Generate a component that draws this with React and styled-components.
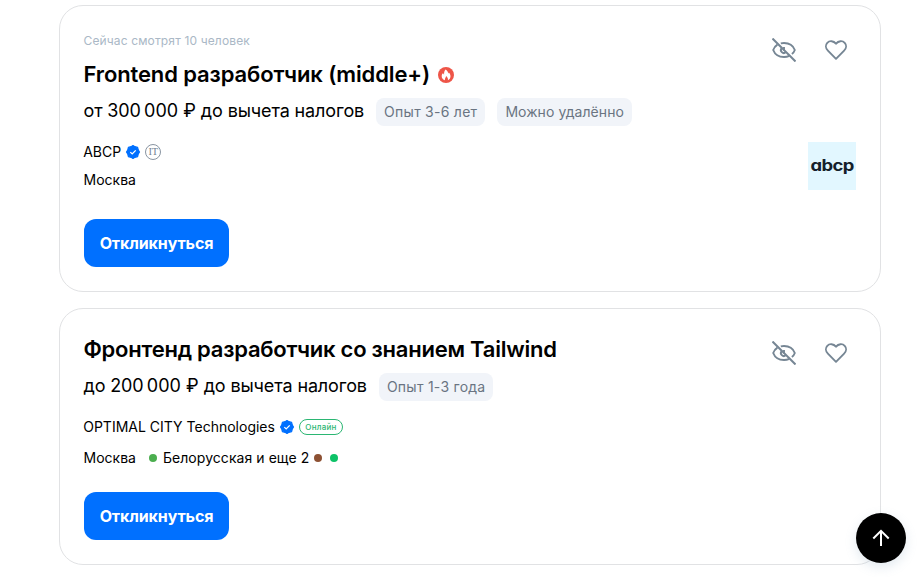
import React from 'react';
import styled, { createGlobalStyle } from "styled-components";

const GlobalStyle = createGlobalStyle`
  * {
    box-sizing: border-box;
  }
  body {
    margin: 0;
    background: #fff;
    color: #000;
    font-family: Inter, "Liberation Sans", sans-serif;
    overflow: hidden;
  }
`;

const List = styled.main`
  display: flex;
  flex-direction: column;
  gap: 16px;
  width: 822px;
  margin-left: 59px;
  padding-top: 5px;
`;

const Card = styled.article`
  display: flex;
  justify-content: space-between;
  padding: 24px;
  border: 1px solid #e1e2e4;
  border-radius: 24px;
`;

const Info = styled.div`
  display: flex;
  flex-direction: column;
  align-items: flex-start;
`;

const Viewers = styled.div`
  height: 22px;
  margin-bottom: 6px;
  margin-left: -0.5px;
  font-size: 12px;
  line-height: 22px;
  letter-spacing: 0.14px;
  color: #aab8c6;
`;

const TitleRow = styled.div`
  display: flex;
  align-items: center;
  gap: 8px;
  height: 28px;
  margin-top: 3px;
  margin-left: -0.5px;
`;

const Title = styled.h2`
  margin: 0;
  padding-bottom: 2px;
  font-size: 22px;
  font-weight: 600;
  line-height: 28px;
  letter-spacing: ${(p) => p.$tracking}px;
  white-space: nowrap;
`;

const SalaryRow = styled.div`
  display: flex;
  gap: 12px;
  margin-top: 9px;
  margin-left: -0.5px;
`;

const Salary = styled.span`
  font-size: 18px;
  line-height: 26px;
  letter-spacing: -0.13px;
  white-space: nowrap;
`;

const Tag = styled.span`
  height: 28px;
  padding: 0 8px;
  border-radius: 8px;
  background: #f1f4f9;
  color: #6a7482;
  font-size: 14px;
  line-height: 28px;
  letter-spacing: ${(p) => (p.$wide ? 0.26 : 0.06)}px;
  white-space: nowrap;
`;

const CompanyRow = styled.div`
  display: flex;
  align-items: center;
  gap: 4px;
  height: 20px;
  margin-top: 16px;
  margin-left: -0.8px;
  font-size: 14px;
`;

const AddressRow = styled.div`
  display: flex;
  align-items: center;
  height: 20px;
  margin-top: ${(p) => (p.$metro ? 11 : 8)}px;
  margin-left: -0.5px;
  font-size: 14px;
`;

const Text = styled.span`
  padding-bottom: 2px;
  letter-spacing: ${(p) => p.$tracking || 0}px;
  white-space: nowrap;
`;

const Dot = styled.i`
  width: 8px;
  height: 8px;
  margin-left: ${(p) => p.$left}px;
  margin-right: ${(p) => p.$right || 0}px;
  border-radius: 50%;
  background: ${(p) => p.$color};
`;

const Online = styled.span`
  width: 44px;
  height: 16px;
  border: 1px solid #2bb673;
  border-radius: 8px;
  color: #2bb673;
  font-size: 8px;
  font-weight: 500;
  line-height: 14px;
  letter-spacing: 0.25px;
  text-align: center;
`;

const RespondButton = styled.button`
  width: 145px;
  height: 48px;
  margin-top: ${(p) => (p.$metro ? 24 : 29)}px;
  padding: 0;
  border: none;
  border-radius: 12px;
  background: #0070ff;
  color: #fff;
  font-family: inherit;
  font-size: 16px;
  font-weight: 700;
  letter-spacing: -0.12px;
  cursor: pointer;
`;

const Side = styled.div`
  display: flex;
  flex-direction: column;
  align-items: flex-end;
  gap: 72px;
`;

const Actions = styled.div`
  display: flex;
  gap: 12px;
`;

const IconButton = styled.button`
  display: grid;
  place-items: center;
  width: 40px;
  height: 40px;
  padding: 0;
  border: none;
  background: none;
  color: #768694;
  cursor: pointer;
`;

const Logo = styled.div`
  display: grid;
  place-items: center;
  width: 48px;
  height: 48px;
  background: #e2f7ff;
  color: #14202b;

  span {
    font-size: 17px;
    font-weight: 700;
    line-height: 20px;
    letter-spacing: -0.5px;
    font-feature-settings: "cv11";
    padding-bottom: 3px;
    transform: scale(1.08, 0.93);
  }
`;

const UpButton = styled.button`
  position: fixed;
  left: 856px;
  top: 513px;
  display: grid;
  place-items: center;
  width: 50px;
  height: 50px;
  padding: 0;
  border: none;
  border-radius: 50%;
  background: #000;
  color: #fff;
  box-shadow: 0 4px 12px rgba(112, 146, 177, 0.2);
  cursor: pointer;
`;

const HideIcon = () => (
  <svg width="24" height="24" viewBox="0 0 24 24" fill="none" stroke="currentColor" strokeWidth="1.9">
    <path d="M5.4 6.600C3.400 7.900 2 9.900 1.200 12c1.600 4.200 5.900 7 10.800 7 1.900 0 3.700-.4 5.300-1.200" />
    <path d="M8.800 5.400c1-.3 2.100-.4 3.200-.4 4.900 0 9.200 2.800 10.800 7-.5 1.500-1.500 2.900-2.900 4" />
    <path d="M9.800 10.200a2.800 2.800 0 1 0 4 4M12 9v3.500" />
    <path d="M.5.5l23 23" strokeWidth="2" />
  </svg>
);

const HeartIcon = () => (
  <svg width="24" height="24" viewBox="0 0 24 24" fill="none" stroke="currentColor" strokeWidth="1.9" strokeLinejoin="round">
    <path d="M12 20.800 3.900 12.700C1.400 10.200 1.400 6.800 3.300 4.800c2.200-2.400 6.200-2.200 8.700.9 2.500-3.100 6.500-3.300 8.700-.9 1.900 2 1.900 5.400-.6 7.900Z" />
  </svg>
);

const FireIcon = () => (
  <svg width="16" height="16" viewBox="0 0 16 16">
    <circle cx="8" cy="8" r="8" fill="#ee5548" />
    <path fill="#fff" d="M7.600 2.500c1.900 1.300 2.600 2.600 2.500 4.100.4-.3.600-.6.700-1.100 1.100 1.100 1.700 2.400 1.700 3.800 0 1.900-1 3.200-2.600 3.900.4-1.600-.4-2.900-1.800-4.100-.1 1.400-1.500 2.300-1.200 4.100-1.800-.6-3.200-2-3.200-4 0-1.400.5-2.300 1.400-3.100.1.900.5 1.300 1 1.600-.2-2 .3-3.800 1.500-5.200Z" />
  </svg>
);

const VerifiedIcon = () => (
  <svg width="16" height="16" viewBox="0 0 16 16">
    <path fill="#0070ff" stroke="#0070ff" strokeWidth="1.200" strokeLinejoin="round" d="m8 1.500 1.900 1.200 2.700.7.700 2.700L14.500 8l-1.200 1.900-.7 2.700-2.700.7L8 14.500l-1.900-1.200-2.700-.7-.7-2.700L1.500 8l1.200-1.900.7-2.700 2.700-.7Z" />
    <path fill="none" stroke="#fff" strokeWidth="1.300" d="m5.300 8.100 1.900 1.800 3.500-3.500" />
  </svg>
);

const ItBadge = styled.span`
  display: grid;
  place-items: center;
  width: 16px;
  height: 16px;
  border: 1px solid #8995a2;
  border-radius: 50%;
  color: #768694;
  font-family: "Liberation Serif", serif;
  font-size: 10.5px;
  line-height: 14px;
  letter-spacing: -0.3px;
`;

const Vacancy = ({ vacancy }) => {
  const { viewers, title, tracking, hot, salary, experience, remote, company, it, online, metro, logo } = vacancy;

  return (
    <Card>
      <Info>
        {viewers && <Viewers>{viewers}</Viewers>}
        <TitleRow>
          <Title $tracking={tracking}>{title}</Title>
          {hot && <FireIcon />}
        </TitleRow>
        <SalaryRow>
          <Salary>{salary}</Salary>
          <Tag $wide>{experience}</Tag>
          {remote && <Tag>Можно удалённо</Tag>}
        </SalaryRow>
        <CompanyRow>
          <Text>{company}</Text>
          <VerifiedIcon />
          {it && <ItBadge>IT</ItBadge>}
          {online && <Online>Онлайн</Online>}
        </CompanyRow>
        <AddressRow $metro={metro}>
          <Text>Москва</Text>
          {metro && (
            <>
              <Dot $color="#4bae4f" $left={13} $right={6} />
              <Text $tracking={0.06}>Белорусская и еще 2</Text>
              <Dot $color="#8d5133" $left={5} />
              <Dot $color="#0dc267" $left={7.5} />
            </>
          )}
        </AddressRow>
        <RespondButton $metro={metro}>Откликнуться</RespondButton>
      </Info>
      <Side>
        <Actions>
          <IconButton aria-label="Скрыть"><HideIcon /></IconButton>
          <IconButton aria-label="В избранное"><HeartIcon /></IconButton>
        </Actions>
        {logo && <Logo><span>{logo}</span></Logo>}
      </Side>
    </Card>
  );
}

const vacancies = [
  {
    viewers: 'Сейчас смотрят 10 человек',
    title: 'Frontend разработчик (middle+)',
    tracking: -0.12,
    hot: true,
    salary: 'от 300\u202f000 ₽ до вычета налогов',
    experience: 'Опыт 3-6 лет',
    remote: true,
    company: 'ABCP',
    it: true,
    logo: 'abcp',
  },
  {
    title: 'Фронтенд разработчик со знанием Tailwind',
    tracking: -0.24,
    salary: 'до 200\u202f000 ₽ до вычета налогов',
    experience: 'Опыт 1-3 года',
    company: 'OPTIMAL CITY Technologies',
    online: true,
    metro: true,
  },
];

const App = () => {
  return (
    <>
      <GlobalStyle />
      <List>
        {vacancies.map((v) => <Vacancy key={v.title} vacancy={v} />)}
      </List>
      <UpButton aria-label="Наверх">
        <svg width="24" height="24" viewBox="0 0 24 24" fill="none" stroke="currentColor" strokeWidth="2">
          <path d="M12 20V5M4.300 12.500 12 4.800l7.700 7.700" />
        </svg>
      </UpButton>
    </>
  );
}

export default App;
